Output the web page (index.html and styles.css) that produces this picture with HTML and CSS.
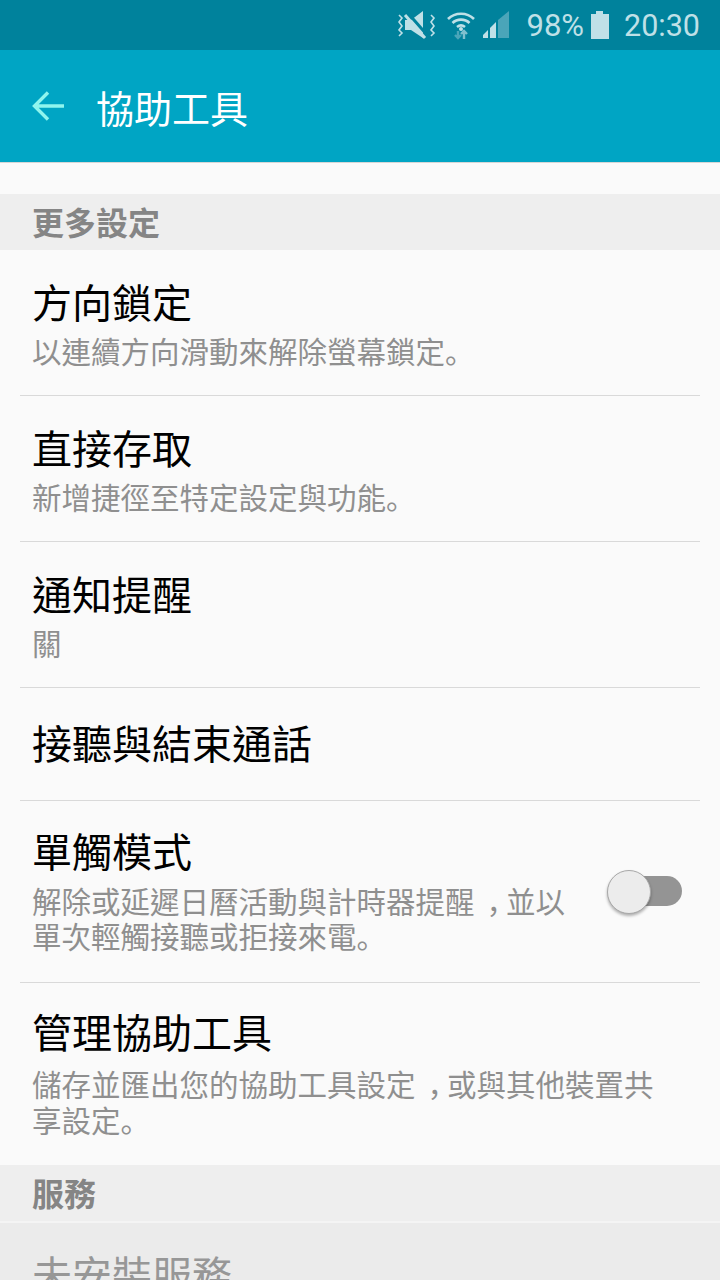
FILE: index.html
```html
<!DOCTYPE html>
<html lang="zh-Hant">
<head>
    <meta charset="UTF-8">
    <meta name="viewport" content="width=device-width, initial-scale=1.0">
    <title>協助工具</title>
    <link rel="stylesheet" href="styles.css">
</head>
<body>
    <div class="screen">
        <div class="statusbar">
            <svg class="ic-mute" width="40" height="28" viewBox="0 0 40 28">
                <g fill="none" stroke="#bfe0e7" stroke-width="1.600">
                    <path d="M3 4l3 3-3 4 3 4-3 4 3 3-3 3"/>
                    <path d="M35 4l3 3-3 4 3 4-3 4 3 3-3 3"/>
                </g>
                <path d="M9 9h6L27 0v27L15 19H9z" fill="#bfe0e7"/>
                <path d="M11 1l21 24" stroke="#00829c" stroke-width="3"/>
                <path d="M9 4l20 23" stroke="#bfe0e7" stroke-width="3"/>
            </svg>
            <svg class="ic-wifi" width="30" height="30" viewBox="0 0 30 30">
                <g fill="none" stroke="#bfe0e7" stroke-width="2.600">
                    <path d="M2 9c7-7 19-7 26 0"/>
                    <path d="M6.500 13c4.500-4.500 12.500-4.500 17 0"/>
                    <path d="M11 17c2.500-2 5.500-2 8 0"/>
                </g>
                <circle cx="15" cy="19" r="2" fill="#bfe0e7"/>
                <path d="M12 21v7M9 25l3 3 3-3" fill="none" stroke="#4aa5b9" stroke-width="2.400"/>
                <path d="M18 29v-8M15 24l3-3 3 3" fill="none" stroke="#7fc0ce" stroke-width="2.400"/>
            </svg>
            <svg class="ic-signal" width="28" height="28" viewBox="0 0 28 28">
                <path d="M1 27v-3l5-5v8z" fill="#bfe0e7"/>
                <path d="M8 27V17l6-6v16z" fill="#bfe0e7"/>
                <path d="M16 27V9L27 0v27z" fill="#4aa5b9"/>
            </svg>
            <span class="batt-text">98%</span>
            <svg class="ic-batt" width="18" height="28" viewBox="0 0 18 28">
                <path d="M5 0h7v3h6v25H0V3h5z" fill="#bfe0e7"/>
            </svg>
            <span class="clock">20:30</span>
        </div>
        <div class="appbar">
            <svg class="back" width="34" height="34" viewBox="0 0 34 34">
                <path d="M33 17H4M17 3.500L3.500 17 17 30.500" fill="none" stroke="#8ff5ee" stroke-width="3.400"/>
            </svg>
            <h1>協助工具</h1>
        </div>

        <div class="spacer"></div>
        <div class="section">更多設定</div>

        <div class="row r146">
            <div class="title">方向鎖定</div>
            <div class="sub">以連續方向滑動來解除螢幕鎖定<span class="punct" lang="zh-Hans">。</span></div>
        </div>
        <div class="row r146">
            <div class="title">直接存取</div>
            <div class="sub">新增捷徑至特定設定與功能<span class="punct" lang="zh-Hans">。</span></div>
        </div>
        <div class="row r146">
            <div class="title">通知提醒</div>
            <div class="sub">關</div>
        </div>
        <div class="row r113">
            <div class="title">接聽與結束通話</div>
        </div>
        <div class="row r182 with-toggle">
            <div class="row-text">
                <div class="title">單觸模式</div>
                <div class="sub">解除或延遲日曆活動與計時器提醒<span class="comma" lang="zh-Hans">，</span>並以單次輕觸接聽或拒接來電<span class="punct" lang="zh-Hans">。</span></div>
            </div>
            <div class="toggle"><div class="knob"></div></div>
        </div>
        <div class="row r182 last">
            <div class="title">管理協助工具</div>
            <div class="sub">儲存並匯出您的協助工具設定<span class="comma" lang="zh-Hans">，</span>或與其他裝置共享設定<span class="punct" lang="zh-Hans">。</span></div>
        </div>

        <div class="section section-b">服務</div>
        <div class="row disabled">
            <div class="title">未安裝服務</div>
        </div>
    </div>
</body>
</html>
```
FILE: styles.css
```css
html, body {
    margin: 0;
    padding: 0;
}

body {
    font-family: "Roboto", "Noto Sans CJK TC", sans-serif;
    background-color: #fafafa;
}

.screen {
    width: 720px;
    height: 1280px;
    overflow: hidden;
}

.statusbar {
    height: 50px;
    background-color: #00829c;
    display: flex;
    align-items: center;
    justify-content: flex-end;
    padding-right: 20px;
    color: #bfe0e7;
    box-sizing: border-box;
}

.ic-mute {
    margin-right: 10px;
}

.ic-wifi {
    margin-right: 6px;
}

.ic-signal {
    margin-right: 16px;
}

.batt-text {
    font-size: 31px;
    margin-right: 7px;
}

.ic-batt {
    margin-right: 15px;
}

.clock {
    font-size: 30.500px;
}

.appbar {
    height: 113px;
    background-color: #00a5c4;
    border-bottom: 1px solid #d6d6d6;
    box-sizing: border-box;
    display: flex;
    align-items: center;
    padding-left: 31px;
    color: #ffffff;
}

.back {
    margin-right: 31px;
}

.appbar h1 {
    margin: 0;
    font-size: 38px;
    font-weight: 400;
}

.spacer {
    height: 31px;
}

.section {
    height: 56px;
    line-height: 60px;
    background-color: #eeeeee;
    color: #858585;
    font-size: 32px;
    font-weight: 700;
    padding-left: 32px;
}

.row {
    margin: 0 20px;
    padding: 2px 12px 0;
    border-bottom: 1px solid #d9d9d9;
    box-sizing: border-box;
    display: flex;
    flex-direction: column;
    justify-content: center;
}

.r146 {
    height: 146px;
}

.r113 {
    height: 113px;
    padding-top: 4px;
}

.r182 {
    height: 182px;
}

.title {
    font-size: 40px;
    line-height: 56px;
    color: #000000;
}

.sub {
    font-size: 29.500px;
    line-height: 36px;
    color: #8f8f8f;
    margin-top: 2px;
}

.punct,
.comma {
    font-family: "Noto Sans CJK SC", sans-serif;
    line-height: 0;
}

.comma {
    margin-left: 12px;
    margin-right: -10px;
}

.with-toggle {
    flex-direction: row;
    align-items: center;
    justify-content: space-between;
    padding-top: 0;
}

.with-toggle .sub {
    margin-top: 4px;
    line-height: 35px;
}

.last {
    padding-bottom: 3px;
    border-bottom: none;
}

.last .sub {
    margin-top: 5px;
    line-height: 36px;
    padding-right: 20px;
}

.row-text {
    width: 540px;
    padding-bottom: 2px;
}

.toggle {
    width: 74px;
    height: 30px;
    border-radius: 15px;
    background-color: #949494;
    margin: 0 6px 2px 0;
    position: relative;
}

.knob {
    position: absolute;
    left: -1px;
    top: -6px;
    width: 42px;
    height: 42px;
    border-radius: 50%;
    background-color: #ececec;
    border: 1px solid #a8a8a8;
    box-shadow: 0 2px 3px rgba(0, 0, 0, 0.3);
}

.section-b {
    border-bottom: 2px solid #f4f4f4;
}

.disabled {
    margin: 0;
    padding: 26px 32px 0;
    height: 60px;
    justify-content: flex-start;
    background-color: #ebebeb;
    border-bottom: none;
}

.disabled .title {
    color: #979797;
}
```
